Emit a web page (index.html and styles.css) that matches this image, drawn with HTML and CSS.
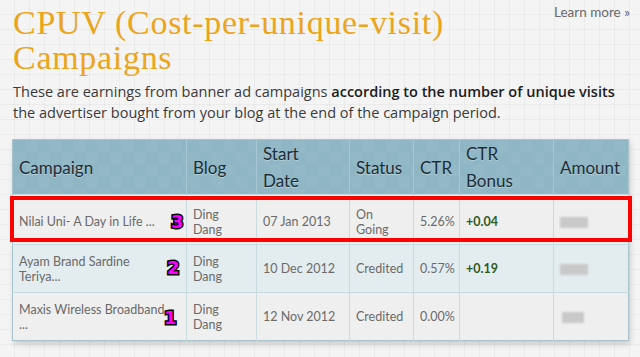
FILE: index.html
```html
<!DOCTYPE html>
<html>
<head>
<meta charset="utf-8">
<link rel="stylesheet" href="styles.css">
</head>
<body>
<div class="page">
  <div class="top">
    <h1 class="title">CPUV (Cost-per-unique-visit)<br>Campaigns</h1>
    <a class="learn">Learn more »</a>
  </div>
  <p class="intro">These are earnings from banner ad campaigns <b>according to the number of unique visits</b> the advertiser bought from your blog at the end of the campaign period.</p>
  <div class="tablewrap">
    <table class="camp">
      <colgroup>
        <col class="c1"><col class="c2"><col class="c3"><col class="c4"><col class="c5"><col class="c6"><col class="c7">
      </colgroup>
      <thead>
        <tr>
          <th>Campaign</th><th>Blog</th><th>Start<br>Date</th><th>Status</th><th>CTR</th><th>CTR<br>Bonus</th><th>Amount</th>
        </tr>
      </thead>
      <tbody>
        <tr class="spacer"><td colspan="7"></td></tr>
        <tr class="odd r1">
          <td class="name">Nilai Uni- A Day in Life ...<span class="badge b3">3</span></td>
          <td>Ding<br>Dang</td><td>07 Jan 2013</td><td>On<br>Going</td><td>5.26%</td><td class="bonus">+0.04</td><td><span class="blur w1"></span></td>
        </tr>
        <tr class="even r2">
          <td class="name">Ayam Brand Sardine<br>Teriya...<span class="badge b2">2</span></td>
          <td>Ding<br>Dang</td><td>10 Dec 2012</td><td>Credited</td><td>0.57%</td><td class="bonus">+0.19</td><td><span class="blur w2"></span></td>
        </tr>
        <tr class="odd r3">
          <td class="name">Maxis Wireless Broadband<br>...<span class="badge b1">1</span></td>
          <td>Ding<br>Dang</td><td>12 Nov 2012</td><td>Credited</td><td>0.00%</td><td class="bonus"></td><td><span class="blur w3"></span></td>
        </tr>
      </tbody>
    </table>
    <div class="highlight"></div>
  </div>
</div>
</body>
</html>
```

FILE: styles.css
```css
html, body {
  margin: 0;
  padding: 0;
}
body {
  width: 640px;
  height: 357px;
  overflow: hidden;
  background-color: #f4f4f4;
  background-image:
    repeating-linear-gradient(to right, transparent 0 14px, rgba(0,0,0,0.035) 14px 15px),
    repeating-linear-gradient(to bottom, transparent 0 14px, rgba(0,0,0,0.035) 14px 15px);
  font-family: Lato, "Open Sans", sans-serif;
}
.page {
  padding: 0 12px 0 13px;
}
.top {
  display: flex;
  justify-content: space-between;
  align-items: flex-start;
}
.title {
  margin: 0;
  padding-top: 5px;
  font-family: "Liberation Serif", "DejaVu Serif", serif;
  font-weight: normal;
  font-size: 34px;
  line-height: 35px;
  letter-spacing: 0.7px;
  color: #eba51c;
}
.learn {
  margin-top: 4px;
  margin-right: -2px;
  font-size: 13.5px;
  color: #6a6a6a;
}
.intro {
  margin: 6px -10px 0 0;
  font-family: "Open Sans", Lato, sans-serif;
  font-size: 14.5px;
  line-height: 21px;
  color: #3a3a3a;
  font-weight: 400;
}
.intro b {
  font-weight: 600;
  color: #1c1c1c;
}
.tablewrap {
  position: relative;
  margin-top: 16px;
  margin-left: -1px;
  width: 616px;
  box-shadow: 2px 3px 6px rgba(0,0,0,0.18);
}
.camp {
  width: 616px;
  border-collapse: collapse;
  table-layout: fixed;
  border: 1px solid #a9c3cd;
}
.c1 { width: 174px; }
.c2 { width: 70px; }
.c3 { width: 93px; }
.c4 { width: 64px; }
.c5 { width: 46px; }
.c6 { width: 94px; }
.c7 { width: 75px; }
.camp th {
  height: 52px;
  padding: 0 0 0 6px;
  text-align: left;
  vertical-align: middle;
  font-weight: normal;
  font-size: 17px;
  line-height: 27px;
  color: #1d2d36;
  text-shadow: 0 1px 0 rgba(255,255,255,0.35);
  border-left: 1px solid #a8c7d3;
  background-color: #8fb6c5;
  background-image:
    linear-gradient(45deg, rgba(255,255,255,0.04) 25%, transparent 25%, transparent 75%, rgba(255,255,255,0.04) 75%),
    linear-gradient(45deg, rgba(255,255,255,0.04) 25%, transparent 25%, transparent 75%, rgba(255,255,255,0.04) 75%);
  background-size: 24px 24px;
  background-position: 0 0, 12px 12px;
}
.camp th:first-child { border-left: none; }
.spacer td {
  height: 3px;
  padding: 0;
  background: #eef3f4;
  border: none;
}
.camp td {
  padding: 0 0 0 6px;
  vertical-align: middle;
  font-size: 12.5px;
  line-height: 15px;
  color: #6a6a6a;
  border-left: 1px solid #c7dbe1;
  border-top: 1px solid #c7dbe1;
}
.camp td:first-child { border-left: none; }
.r1 td { height: 45px; }
.r2 td, .r3 td { height: 47px; }
.odd td { background: #efefef; }
.even td { background: #e3ecef; }
.name { position: relative; }
.bonus {
  color: #2f5a22 !important;
  font-weight: 700;
}
.blur {
  display: inline-block;
  height: 11px;
  background: #c9c9c9;
  filter: blur(0.8px);
  vertical-align: middle;
}
.w1 { width: 28px; }
.w2 { width: 28px; }
.w3 { width: 22px; margin-left: 2px; }
.badge {
  position: absolute;
  font-family: "DejaVu Sans", sans-serif;
  font-weight: 700;
  font-size: 18px;
  line-height: 18px;
  color: #ff00ff;
  -webkit-text-stroke: 3px #000;
  paint-order: stroke fill;
}
.b3 { left: 158px; top: 14px; }
.b2 { left: 154px; top: 14px; }
.b1 { left: 151px; top: 16px; }
.highlight {
  position: absolute;
  left: -2px;
  top: 57px;
  width: 614px;
  height: 38px;
  border: 4px solid #ff0000;
  pointer-events: none;
}
```
